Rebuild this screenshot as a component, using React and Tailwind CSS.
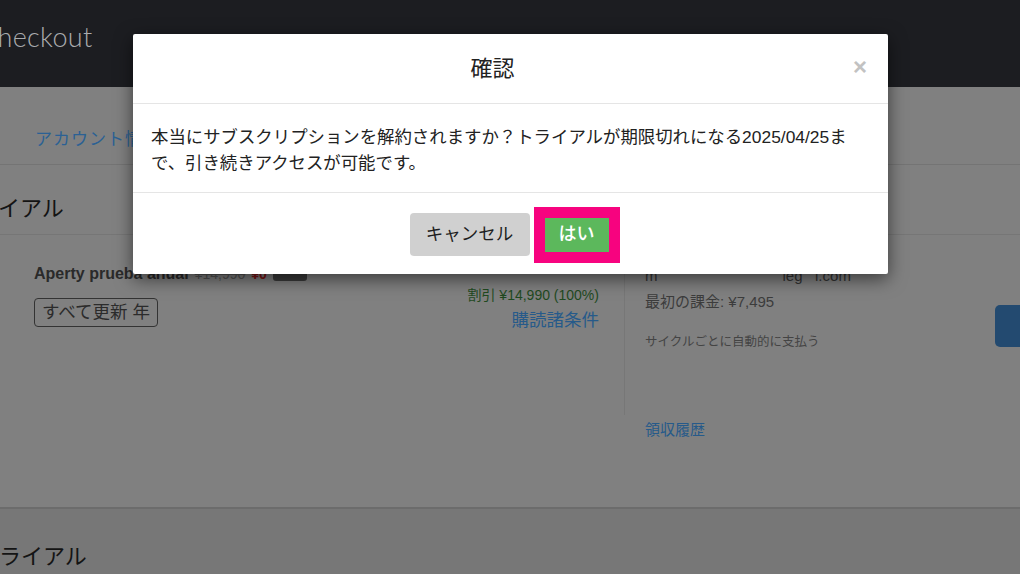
import React from "react";

const jp = { fontFamily: '"Liberation Sans", "Noto Sans CJK JP", sans-serif' };

function Page() {
  return (
    <div className="flex flex-col w-full h-full bg-[#808080]">
      {/* top nav */}
      <div className="h-[87px] shrink-0 bg-[#1c1d21] flex items-center pb-[12px]">
        <span className="ml-[-21px] text-[27px] font-light text-[#a9abae] tracking-[0.3px]" style={{ fontFamily: 'Lato, "Open Sans", sans-serif' }}>
          Checkout
        </span>
      </div>
      {/* tabs */}
      <div className="h-[78px] shrink-0 border-b border-[#747474] flex items-center pl-[35px] pt-[28px]">
        <span className="text-[17px] text-[#2b6194] tracking-[1px]">アカウント情報</span>
      </div>
      {/* heading */}
      <div className="h-[70px] shrink-0 border-b border-[#767676] flex items-center pt-[18px]">
        <span className="ml-[-46px] text-[22px] text-[#141414]">トライアル</span>
      </div>
      {/* content */}
      <div className="h-[272px] shrink-0 flex">
        <div className="w-[625px] h-[180px] border-r border-[#777] flex justify-between pl-[34px] pr-[25px] pt-[29px]">
          <div className="flex flex-col items-start">
            <div className="flex items-center gap-[6px] h-[20px]">
              <span className="font-bold text-[16px] text-[#2a2a2a]" style={{ fontFamily: '"Liberation Sans", sans-serif' }}>Aperty prueba anual</span>
              <span className="text-[14px] text-[#555] line-through">¥14,990</span>
              <span className="text-[14px] font-bold text-[#7a1515]">¥0</span>
              <span className="w-[34px] h-[14px] rounded-[3px] bg-[#3b3b3b]"></span>
            </div>
            <div className="mt-[14px] border border-[#333] rounded-[4px] px-[7px] h-[29px] flex items-center text-[17.5px] text-[#2b2b2b]">
              すべて更新 年
            </div>
          </div>
          <div className="flex flex-col items-end pt-[21px]">
            <span className="text-[14px] text-[#1f4a1f] leading-[20px]">割引 ¥14,990 (100%)</span>
            <span className="mt-[3px] text-[17.5px] text-[#265a8a] leading-[24px]">購読諸条件</span>
          </div>
        </div>
        <div className="flex-1 flex justify-between pl-[20px]">
          <div className="flex flex-col pt-[30px]">
            <span className="text-[15px] text-[#333] leading-[22px]">m&nbsp;&nbsp;&nbsp;&nbsp;&nbsp;&nbsp;&nbsp;&nbsp;&nbsp;&nbsp;&nbsp;&nbsp;&nbsp;&nbsp;&nbsp;&nbsp;&nbsp;&nbsp;&nbsp;&nbsp;&nbsp;&nbsp;&nbsp;&nbsp;&nbsp;&nbsp;&nbsp;&nbsp;&nbsp;&nbsp;leg&nbsp;&nbsp;&nbsp;l.com</span>
            <span className="mt-[4px] text-[15px] text-[#3c3c3c] leading-[22px]">最初の課金: ¥7,495</span>
            <span className="mt-[20px] text-[12.5px] text-[#444] leading-[18px]">サイクルごとに自動的に支払う</span>
            <span className="mt-[68px] text-[15px] text-[#265a8a] leading-[22px]">領収履歴</span>
          </div>
          <div className="pt-[70px]">
            <div className="w-[40px] h-[42px] -mr-[15px] rounded-[5px] bg-[#234a70]"></div>
          </div>
        </div>
      </div>
      {/* bottom band */}
      <div className="flex-1 border-t-2 border-[#6c6c6c] bg-[#777] flex items-end pb-[1px]">
        <span className="ml-[-23px] text-[22px] text-[#141414]">トライアル</span>
      </div>
    </div>
  );
}

function Modal() {
  return (
    <div className="absolute left-[133px] top-[34px] w-[755px] bg-white rounded-[2px] shadow-[0_5px_18px_rgba(0,0,0,0.55)]">
      <div className="relative h-[70px] border-b border-[#e5e5e5] flex items-center justify-center pr-[36px]">
        <span className="text-[22px] text-[#222]">確認</span>
        <span className="absolute right-[21px] top-[18px] text-[24px] font-bold text-[#c2c2c2] leading-[30px]" style={{ fontFamily: '"Liberation Sans", sans-serif' }}>×</span>
      </div>
      <div className="h-[89px] border-b border-[#e5e5e5] px-[18px] pt-[20px] text-[17.4px] leading-[26px] text-[#222]">
        <div className="whitespace-nowrap">本当にサブスクリプションを解約されますか？トライアルが期限切れになる2025/04/25ま</div>
        <div className="whitespace-nowrap">で、引き続きアクセスが可能です。</div>
      </div>
      <div className="h-[81px] flex items-center justify-center gap-[4px] pl-[8px] pt-[2px]">
        <div className="w-[120px] h-[43px] rounded-[4px] bg-[#d0d0d0] flex items-center justify-center text-[17.5px] text-[#1e1e1e]">
          キャンセル
        </div>
        <div className="w-[86px] h-[56px] border-[11px] border-[#f7037f] flex items-center justify-center bg-[#5cb85c]">
          <span className="text-[18px] text-white font-medium">はい</span>
        </div>
      </div>
    </div>
  );
}

export default function App() {
  return (
    <div className="relative w-[1020px] h-[574px] overflow-hidden" style={jp}>
      <Page />
      <Modal />
    </div>
  );
}
